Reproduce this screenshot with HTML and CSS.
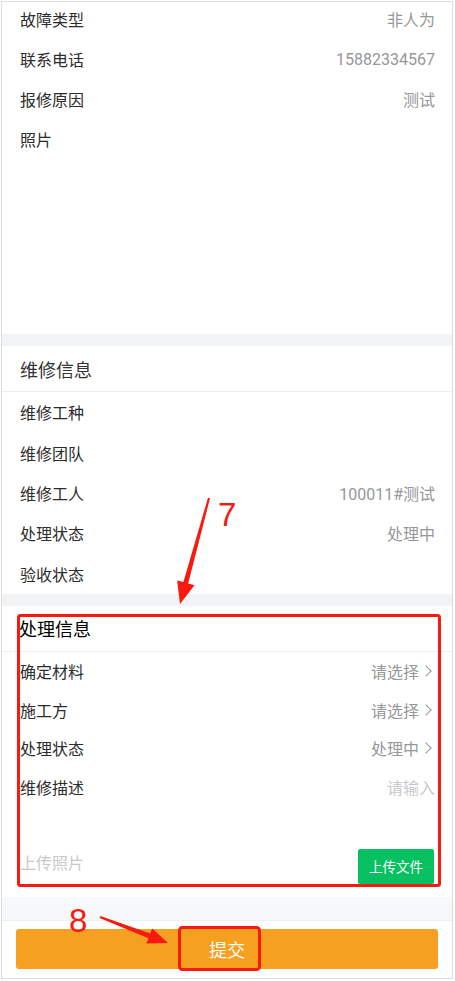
FILE: index.html
```html
<!DOCTYPE html>
<html lang="zh-CN">
<head>
    <meta charset="UTF-8">
    <meta name="viewport" content="width=device-width, initial-scale=1.0">
    <title>工单处理</title>
    <link rel="stylesheet" href="styles.css">
</head>
<body>
    <div class="phone">
        <div class="scroll">
            <!-- 报修信息 -->
            <div class="section">
                <div class="cell"><span class="label">故障类型</span><span class="value">非人为</span></div>
                <div class="cell"><span class="label">联系电话</span><span class="value">15882334567</span></div>
                <div class="cell"><span class="label">报修原因</span><span class="value">测试</span></div>
                <div class="cell"><span class="label">照片</span></div>
                <div class="photo-area"></div>
            </div>

            <div class="gap"></div>

            <!-- 维修信息 -->
            <div class="section">
                <div class="section-title">维修信息</div>
                <div class="cell cell-md"><span class="label">维修工种</span></div>
                <div class="cell cell-md"><span class="label">维修团队</span></div>
                <div class="cell cell-md"><span class="label">维修工人</span><span class="value">100011#测试</span></div>
                <div class="cell cell-md"><span class="label">处理状态</span><span class="value">处理中</span></div>
                <div class="cell cell-md"><span class="label">验收状态</span></div>
            </div>

            <div class="gap"></div>

            <!-- 处理信息 -->
            <div class="section section-form">
                <div class="section-title dark">处理信息</div>
                <div class="cell cell-sm"><span class="label">确定材料</span><span class="value link">请选择<i class="arrow"></i></span></div>
                <div class="cell cell-sm"><span class="label">施工方</span><span class="value link">请选择<i class="arrow"></i></span></div>
                <div class="cell cell-sm"><span class="label">处理状态</span><span class="value link">处理中<i class="arrow"></i></span></div>
                <div class="cell cell-sm"><span class="label">维修描述</span><span class="value placeholder">请输入</span></div>
                <div class="textarea"></div>
                <div class="upload-row">
                    <span class="upload-label">上传照片</span>
                    <button class="upload-btn">上传文件</button>
                </div>
            </div>

            <div class="foot-gap"></div>

            <div class="footer">
                <button class="submit-btn">提交</button>
            </div>
        </div>
    </div>

    <!-- 标注 -->
    <svg class="marks" width="455" height="981" viewBox="0 0 455 981">
        <rect x="18.5" y="615.5" width="421" height="270" rx="2" fill="none" stroke="#f8190f" stroke-width="3"/>
        <rect x="179.5" y="927.5" width="80" height="42" rx="3" fill="none" stroke="#f8190f" stroke-width="3"/>
        <polygon fill="#f8190f" points="208,497.7 210,498.3 188.2,583.5 194.5,585.2 180,604 177.1,580.4 183.4,582.1"/>
        <polygon fill="#f8190f" points="99.6,917.9 100.4,916.1 150.2,933.6 152.2,928.4 168,943 146.4,943.4 148.4,938.2"/>
        <text x="218" y="526" class="mark-num">7</text>
        <text x="69" y="932" class="mark-num">8</text>
    </svg>
</body>
</html>
```

FILE: styles.css
```css
body {
    margin: 0;
    font-family: Roboto, "Noto Sans CJK SC", sans-serif;
    color: #323233;
    background: #fff;
}
.phone {
    position: relative;
    margin: 1px 2px 0 1px;
    height: 978px;
    box-sizing: border-box;
    border: 1px solid #dcdcdc;
    overflow: hidden;
}
.scroll {
    margin-top: -3px;
    display: flex;
    flex-direction: column;
}
.section {
    background: #fff;
}
.cell {
    display: flex;
    justify-content: space-between;
    align-items: center;
    height: 40px;
    padding: 0 17px 0 18px;
    font-size: 16px;
}
.cell-md {
    height: 40.4px;
}
.cell-sm {
    height: 38.5px;
}
.label {
    color: #2c2c2c;
}
.value {
    color: #969799;
    display: flex;
    align-items: center;
}
.value.link {
    margin-right: 5px;
}
.value.placeholder {
    color: #c8c9cc;
}
.arrow {
    display: inline-block;
    width: 7px;
    height: 7px;
    margin-left: 3px;
    border-top: 1.5px solid #969799;
    border-right: 1.5px solid #969799;
    transform: rotate(45deg);
}
.photo-area {
    height: 175px;
}
.gap {
    height: 12px;
    background: #f2f3f5;
}
.section-title {
    height: 45px;
    display: flex;
    align-items: center;
    padding: 0 18px;
    font-size: 18px;
    color: #323233;
    border-bottom: 1px solid #ebedf0;
}
.section-title.dark {
    color: #000;
    padding-left: 17px;
}
.textarea {
    height: 37px;
}
.upload-row {
    display: flex;
    justify-content: space-between;
    align-items: center;
    height: 47px;
    padding: 0 18px 7px 18px;
}
.upload-label {
    font-size: 16px;
    color: #c8c9cc;
    margin-bottom: 9px;
}
.upload-btn {
    width: 76px;
    height: 35px;
    border: none;
    border-radius: 2px;
    background: #07c160;
    color: #fff;
    font-family: inherit;
    font-size: 13.5px;
    padding: 0;
}
.foot-gap {
    height: 23px;
    background: #f7f8fa;
    border-bottom: 1px solid #efefef;
}
.footer {
    background: #fff;
    padding: 8px 14px;
}
.submit-btn {
    width: 100%;
    height: 40px;
    border: none;
    border-radius: 3px;
    background: #f6a021;
    color: #fff;
    font-family: inherit;
    font-size: 18px;
}
.marks {
    position: absolute;
    top: 0;
    left: 0;
    pointer-events: none;
}
.mark-num {
    font-family: "Liberation Sans", sans-serif;
    font-size: 33px;
    fill: #f8190f;
}
```
